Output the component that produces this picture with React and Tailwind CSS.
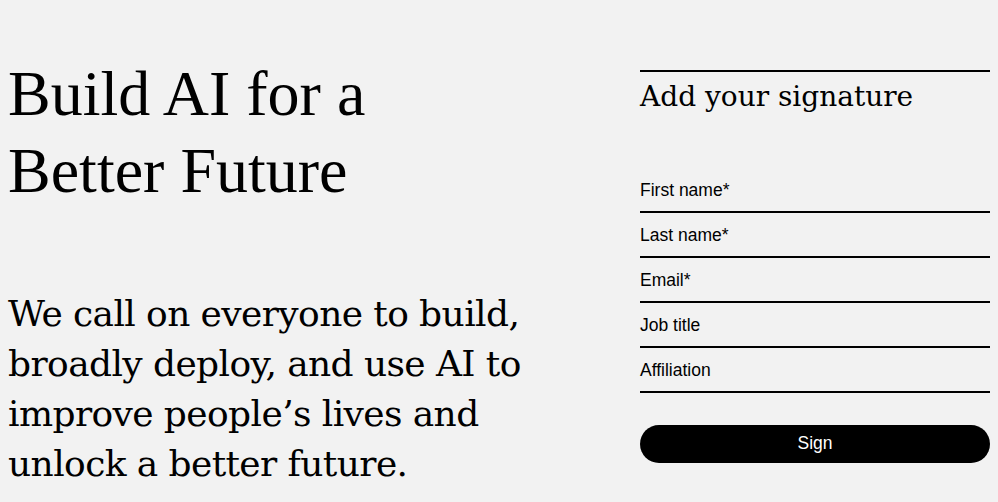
import React from "react";

const fields = [
  { id: "first", label: "First name", required: true },
  { id: "last", label: "Last name", required: true },
  { id: "email", label: "Email", required: true },
  { id: "job", label: "Job title", required: false },
  { id: "affiliation", label: "Affiliation", required: false },
];

export default function App() {
  return (
    <div className="min-h-screen bg-[#f2f2f2] text-black">
      <div className="flex justify-between px-2">

        {/* Left: statement */}
        <div className="w-[560px] pt-[56px]">
          <h1 className="w-[420px] font-['Liberation_Serif',serif] text-[64px] leading-[1.2] font-normal">
            Build AI for a Better Future
          </h1>

          <p className="mt-[79px] font-['DejaVu_Serif',serif] text-[36px] leading-[50px] tracking-[-0.6px]">
            We call on everyone to build, broadly deploy, and use AI to improve people’s lives and unlock a better future.
          </p>
        </div>

        {/* Right: signature form */}
        <div className="w-[350px] pt-[70px]">
          <div className="border-t-2 border-black pt-2">
            <h2 className="font-['DejaVu_Serif',serif] text-[28px] leading-[1.2] font-normal">
              Add your signature
            </h2>
          </div>

          <form className="mt-[54px] font-['Liberation_Sans',Arial,sans-serif]">
            {fields.map((f) => (
              <label
                key={f.id}
                className="flex h-[45px] items-center border-b-2 border-black pt-[2px] text-[17.5px]"
              >
                <span>
                  {f.label}
                  {f.required && <span>*</span>}
                </span>
              </label>
            ))}

            <button
              type="button"
              className="mt-8 h-[38px] w-full rounded-full bg-black text-[17.5px] text-white"
            >
              Sign
            </button>
          </form>
        </div>

      </div>
    </div>
  );
}
